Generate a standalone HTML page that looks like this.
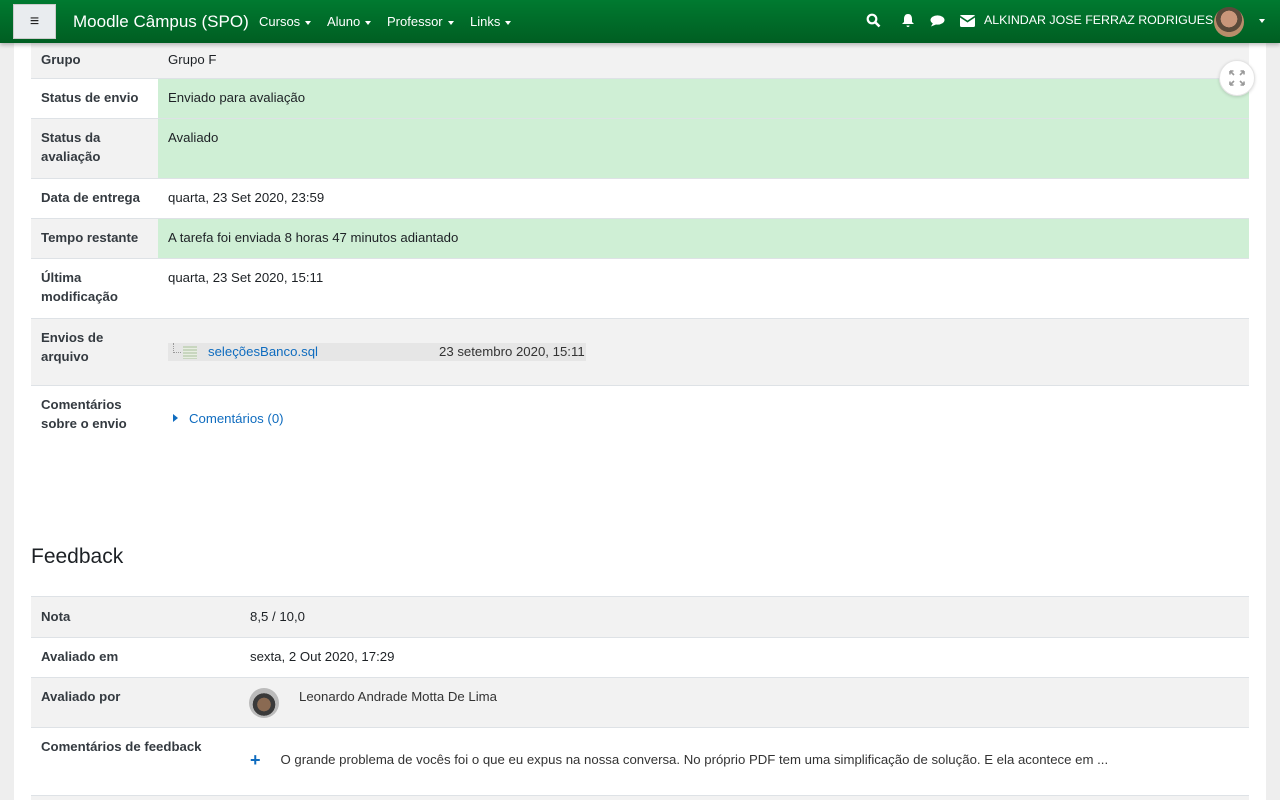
<!DOCTYPE html>
<html><head><meta charset="utf-8"><style>
*{box-sizing:border-box;margin:0;padding:0}
html,body{width:1280px;height:800px;overflow:hidden}
body{background:#eeeeee;font-family:"Liberation Sans",sans-serif;font-size:13.2px;color:#1d2125;position:relative}
.nav{position:absolute;top:0;left:0;width:1280px;height:43px;background:linear-gradient(#007a30,#005e22);box-shadow:0 2px 4px rgba(0,0,0,.25);z-index:5;color:#fff}
.ham{position:absolute;left:13px;top:4px;width:43px;height:35px;background:#e9ecef;border:1px solid #ccc;color:#222;text-align:center;line-height:33px;font-size:16px;font-weight:bold}
.brand{position:absolute;left:73px;top:12px;font-size:17px}
.menu{position:absolute;top:14px;font-size:13px}
.caret{display:inline-block;border-left:3px solid transparent;border-right:3px solid transparent;border-top:4px solid #fff;vertical-align:middle;margin-left:5px}
.main{position:absolute;left:14px;top:0;width:1252px;height:800px;background:#fff}
table{position:absolute;left:31px;width:1218px;border-collapse:collapse}
td{border-top:1px solid #dee2e6;vertical-align:top;padding:9px 10px 0;line-height:19px}
td.l{font-weight:bold;color:#343a40}
tr.g td{background:#f2f2f2}
tr td.ok,tr.g td.ok{background:#cfefd5}
a{color:#0f6cbf;text-decoration:none}
h3{position:absolute;left:31px;top:545px;font-size:21px;font-weight:normal;color:#1d2125}
</style></head><body>
<div class="main"></div>
<div class="nav">
<div class="ham">≡</div>
<div class="brand">Moodle Câmpus (SPO)</div>
<div class="menu" style="left:259px">Cursos<span class="caret"></span></div>
<div class="menu" style="left:327px">Aluno<span class="caret"></span></div>
<div class="menu" style="left:387px">Professor<span class="caret"></span></div>
<div class="menu" style="left:470px">Links<span class="caret"></span></div>
<svg style="position:absolute;left:866px;top:13px" width="15" height="15" viewBox="0 0 15 15"><circle cx="6" cy="6" r="4.3" fill="none" stroke="#fff" stroke-width="2.2"/><path d="M9 9l4.5 4.5" stroke="#fff" stroke-width="2.6"/></svg>
<svg style="position:absolute;left:901px;top:13px" width="14" height="15" viewBox="0 0 14 15"><path d="M7 1c-3 0-4 2.5-4 5v3l-2 2h12l-2-2V6c0-2.5-1-5-4-5z M5.5 12.5a1.5 1.5 0 0 0 3 0z" fill="#fff"/></svg>
<svg style="position:absolute;left:930px;top:15px" width="15" height="12" viewBox="0 0 15 12"><ellipse cx="7.5" cy="5" rx="7" ry="4.6" fill="#fff"/><path d="M3 8l-2 3.5 5-2z" fill="#fff"/></svg>
<svg style="position:absolute;left:960px;top:15px" width="15" height="12" viewBox="0 0 15 12"><rect x="0" y="0" width="15" height="12" rx="1.5" fill="#fff"/><path d="M0 1.5l7.5 5 7.5-5" fill="none" stroke="#006a29" stroke-width="1.6"/></svg>
<div style="position:absolute;left:984px;top:13px;font-size:12.4px">ALKINDAR JOSE FERRAZ RODRIGUES</div>
<div style="position:absolute;left:1214px;top:7px;width:30px;height:30px;border-radius:50%;background:radial-gradient(circle at 50% 40%,#c9967a 0 35%,#5a4a3a 36% 55%,#b88d6a 56%)"></div>
<span class="caret" style="position:absolute;left:1259px;top:19px;margin:0"></span>
</div>
<div style="position:absolute;left:1219px;top:60px;width:36px;height:36px;border-radius:50%;background:#fff;border:1px solid #e4e4e4;box-shadow:0 1px 3px rgba(0,0,0,.15);z-index:3"><svg width="34" height="34" viewBox="0 0 34 34" fill="none" stroke="#999" stroke-width="1.6"><path d="M10 10l4 4M10 10h3.5M10 10v3.5M24 10l-4 4M24 10h-3.5M24 10v3.5M10 24l4-4M10 24h3.5M10 24v-3.5M24 24l-4-4M24 24h-3.5M24 24v-3.5"/></svg></div>
<table style="top:38px">
<tr class="g" style="height:40px"><td class="l" style="width:127px;padding-top:11px">Grupo</td><td style="padding-top:11px">Grupo F</td></tr>
<tr style="height:40px"><td class="l">Status de envio</td><td class="ok">Enviado para avaliação</td></tr>
<tr class="g" style="height:60px"><td class="l">Status da<br>avaliação</td><td class="ok">Avaliado</td></tr>
<tr style="height:40px"><td class="l">Data de entrega</td><td>quarta, 23 Set 2020, 23:59</td></tr>
<tr class="g" style="height:40px"><td class="l">Tempo restante</td><td class="ok">A tarefa foi enviada 8 horas 47 minutos adiantado</td></tr>
<tr style="height:60px"><td class="l">Última<br>modificação</td><td>quarta, 23 Set 2020, 15:11</td></tr>
<tr class="g" style="height:67px"><td class="l">Envios de<br>arquivo</td><td><div style="margin-top:15px;width:418px;height:18px;background:#e6e6e6;position:relative;line-height:18px"><span style="position:absolute;left:5px;top:0;width:8px;height:10px;border-left:1px dotted #999;border-bottom:1px dotted #999"></span><span style="position:absolute;left:15px;top:3px;width:14px;height:13px;background:repeating-linear-gradient(#c8d6bf 0 2px,#e8eee2 2px 3px)"></span><a style="position:absolute;left:40px">seleçõesBanco.sql</a><span style="position:absolute;left:271px;color:#333">23 setembro 2020, 15:11</span></div></td></tr>
<tr style="height:120px"><td class="l">Comentários<br>sobre o envio</td><td style="padding-top:23px"><span style="display:inline-block;border-top:4px solid transparent;border-bottom:4px solid transparent;border-left:5px solid #0f6cbf;margin:0 11px 1px 5px"></span><a>Comentários (0)</a></td></tr>
</table>
<h3>Feedback</h3>
<table style="top:596px">
<tr class="g" style="height:41px"><td class="l" style="width:209px;padding-top:10px">Nota</td><td style="padding-top:10px">8,5 / 10,0</td></tr>
<tr style="height:40px"><td class="l">Avaliado em</td><td>sexta, 2 Out 2020, 17:29</td></tr>
<tr class="g" style="height:50px"><td class="l">Avaliado por</td><td style="position:relative"><span style="position:absolute;left:9px;top:10px;width:30px;height:30px;border-radius:50%;background:radial-gradient(circle at 50% 55%,#8a6a52 0 30%,#3a3a3a 31% 50%,#bbb 51%)"></span><span style="margin-left:49px;color:#333">Leonardo Andrade Motta De Lima</span></td></tr>
<tr style="height:68px"><td class="l">Comentários de feedback</td><td style="padding-top:22px;color:#333"><span style="color:#0f6cbf;font-weight:bold;font-size:18px;margin-right:20px;vertical-align:-2px">+</span>O grande problema de vocês foi o que eu expus na nossa conversa. No próprio PDF tem uma simplificação de solução. E ela acontece em ...</td></tr>
<tr class="g" style="height:5px"><td></td><td></td></tr>
</table>
</body></html>
